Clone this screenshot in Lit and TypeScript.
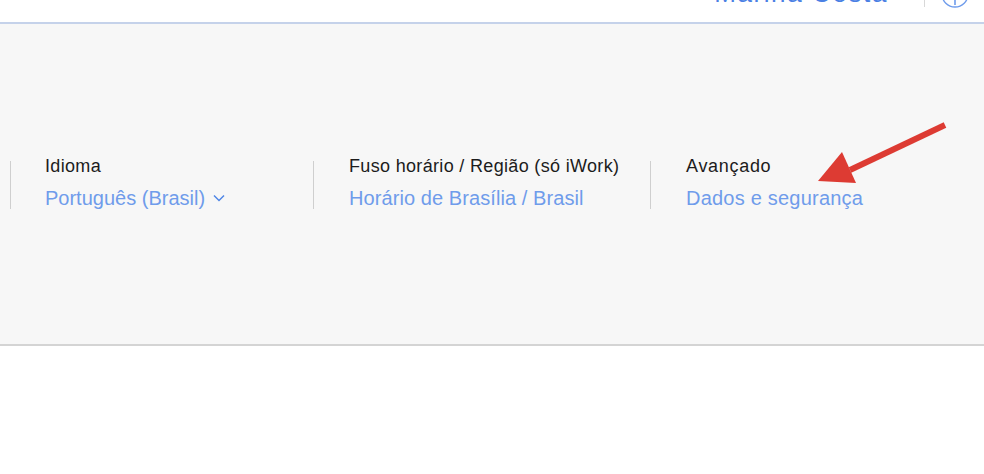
import { LitElement, html, css } from "lit";
import { customElement } from "lit/decorators.js";

@customElement("app-root")
export class AppRoot extends LitElement {
  static styles = css`
    :host { display: block; width: 984px; height: 474px; position: relative; overflow: hidden; background: #fff;
      font-family: "Liberation Sans", Arial, sans-serif; }
    .top { height: 22px; display: flex; justify-content: flex-end; overflow: hidden; }
    .user { margin: -19px 96px 0 0; font-size: 26px; letter-spacing: 1.6px; line-height: 24px; color: #4a80e4; white-space: nowrap; height: 24px; }
    .topsep { width: 1px; height: 7px; background: #d8d8d8; position: absolute; left: 924px; top: 0; }
    .info { position: absolute; left: 941px; top: -20px; width: 28px; height: 28px; }
    .band { height: 324px; box-sizing: border-box; background: #f7f7f7; border-top: 2px solid #c5d2ea; border-bottom: 2px solid #d4d4d4;
      display: flex; align-items: flex-start; padding-top: 137px; }
    .col { height: 48px; box-sizing: border-box; border-left: 1px solid #cfcfcf; padding-left: 34px; }
    .c1 { margin-left: 10px; width: 303px; }
    .c2 { width: 337px; padding-left: 35px; }
    .c3 { padding-left: 35px; }
    .label { font-size: 18px; letter-spacing: .33px; line-height: 18px; color: #1c1c1c; margin-top: -4px; white-space: nowrap; }
    .c3 .label { letter-spacing: .7px; }
    .value { font-size: 20px; line-height: 22px; margin-top: 12px; color: #6f9ceb; white-space: nowrap; display: flex; align-items: center; gap: 8px; }
    .c2 .value { letter-spacing: .08px; }
    .c3 .value { letter-spacing: .22px; }
    .arrow { position: absolute; left: 810px; top: 115px; width: 145px; height: 75px; }
    svg { display: block; }
  `;
  render() {
    return html`
      <div class="top"><span class="user">Marina Costa</span></div>
      <div class="topsep"></div>
      <svg class="info" viewBox="0 0 28 28"><circle cx="14" cy="14" r="13" fill="none" stroke="#6f9ceb" stroke-width="1.4"/><path d="M14 16v9" stroke="#6f9ceb" stroke-width="1.6"/></svg>
      <div class="band">
        <div class="col c1"><div class="label">Idioma</div><div class="value">Português (Brasil)
          <svg width="12" height="8" viewBox="0 0 12 8"><path d="M1 1.5 6 6.5 11 1.5" fill="none" stroke="#4f86e6" stroke-width="1.5"/></svg></div></div>
        <div class="col c2"><div class="label">Fuso horário / Região (só iWork)</div><div class="value">Horário de Brasília / Brasil</div></div>
        <div class="col c3"><div class="label">Avançado</div><div class="value">Dados e segurança</div></div>
      </div>
      <svg class="arrow" viewBox="0 0 145 75"><path d="M135 10 40 55" stroke="#dd3b33" stroke-width="6" fill="none"/><path d="M8 66 32 37 46 68Z" fill="#dd3b33"/></svg>
    `;
  }
}
